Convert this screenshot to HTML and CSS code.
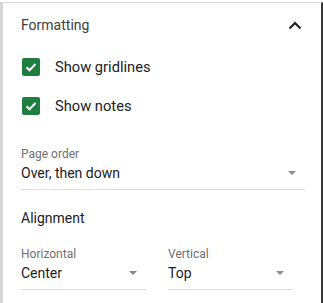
FILE: index.html
```html
<!DOCTYPE html>
<html lang="en">
<head>
    <meta charset="UTF-8">
    <title>Formatting</title>
    <link rel="stylesheet" href="styles.css">
</head>
<body>
    <div class="panel">
        <div class="section-head">
            <span class="section-title">Formatting</span>
            <svg class="chevron" width="14" height="9" viewBox="0 0 14 9">
                <path d="M1.5 7.5 L7 2 L12.5 7.5" fill="none" stroke="#202124" stroke-width="2.2"/>
            </svg>
        </div>

        <label class="check-row">
            <span class="checkbox">
                <svg width="18" height="18" viewBox="0 0 18 18">
                    <path d="M4.5 9.2 L7.5 12.2 L13.5 6" fill="none" stroke="#fff" stroke-width="2"/>
                </svg>
            </span>
            Show gridlines
        </label>
        <label class="check-row">
            <span class="checkbox">
                <svg width="18" height="18" viewBox="0 0 18 18">
                    <path d="M4.5 9.2 L7.5 12.2 L13.5 6" fill="none" stroke="#fff" stroke-width="2"/>
                </svg>
            </span>
            Show notes
        </label>

        <div class="field field-wide">
            <div class="field-label">Page order</div>
            <div class="field-value">
                <span>Over, then down</span>
                <span class="arrow"></span>
            </div>
        </div>

        <div class="sub-title">Alignment</div>

        <div class="field-row">
            <div class="field field-half">
                <div class="field-label">Horizontal</div>
                <div class="field-value">
                    <span>Center</span>
                    <span class="arrow"></span>
                </div>
            </div>
            <div class="field field-half">
                <div class="field-label">Vertical</div>
                <div class="field-value">
                    <span>Top</span>
                    <span class="arrow"></span>
                </div>
            </div>
        </div>
    </div>
</body>
</html>
```

FILE: styles.css
```css
/* General */
html, body {
    margin: 0;
    padding: 0;
    background: #ffffff;
}

body {
    font-family: Roboto, 'Liberation Sans', sans-serif;
    color: #222222;
    padding-top: 2px;
}

.panel {
    box-sizing: border-box;
    width: 323px;
    height: 301px;
    border-left: 3px solid #d6d6d6;
    border-right: 2px solid #3a3a3a;
    border-top: 1px solid #dadada;
    padding: 0 0 0 18px;
    overflow: hidden;
}

/* Section header */
.section-head {
    display: flex;
    align-items: center;
    justify-content: space-between;
    height: 44px;
    padding-right: 19px;
}

.section-title {
    font-size: 14px;
    color: #3c4043;
}

.chevron {
    display: block;
}

/* Checkboxes */
.check-row {
    display: flex;
    align-items: center;
    height: 39px;
    font-size: 14.7px;
    color: #202124;
}

.checkbox {
    width: 18px;
    height: 18px;
    margin: 0 15px 0 1px;
    border-radius: 2px;
    background: #1e7e3e;
}

.checkbox svg {
    display: block;
}

/* Dropdown fields */
.field {
    border-bottom: 1px solid #dcdcdc;
}

.field-wide {
    width: 284px;
    margin-top: 22px;
}

.field-row {
    display: flex;
    gap: 22px;
    margin-top: 21px;
}

.field-half {
    width: 125px;
}

.field-label {
    font-size: 12px;
    color: #6f6f6f;
    line-height: 14px;
}

.field-value {
    display: flex;
    align-items: center;
    justify-content: space-between;
    font-size: 14px;
    line-height: 18px;
    padding: 3px 9px 7px 0;
    color: #202124;
}

.arrow {
    width: 0;
    height: 0;
    border-left: 4px solid transparent;
    border-right: 4px solid transparent;
    border-top: 4px solid #8a8a8a;
}

.sub-title {
    font-size: 14px;
    color: #202124;
    margin-top: 20px;
}
```
